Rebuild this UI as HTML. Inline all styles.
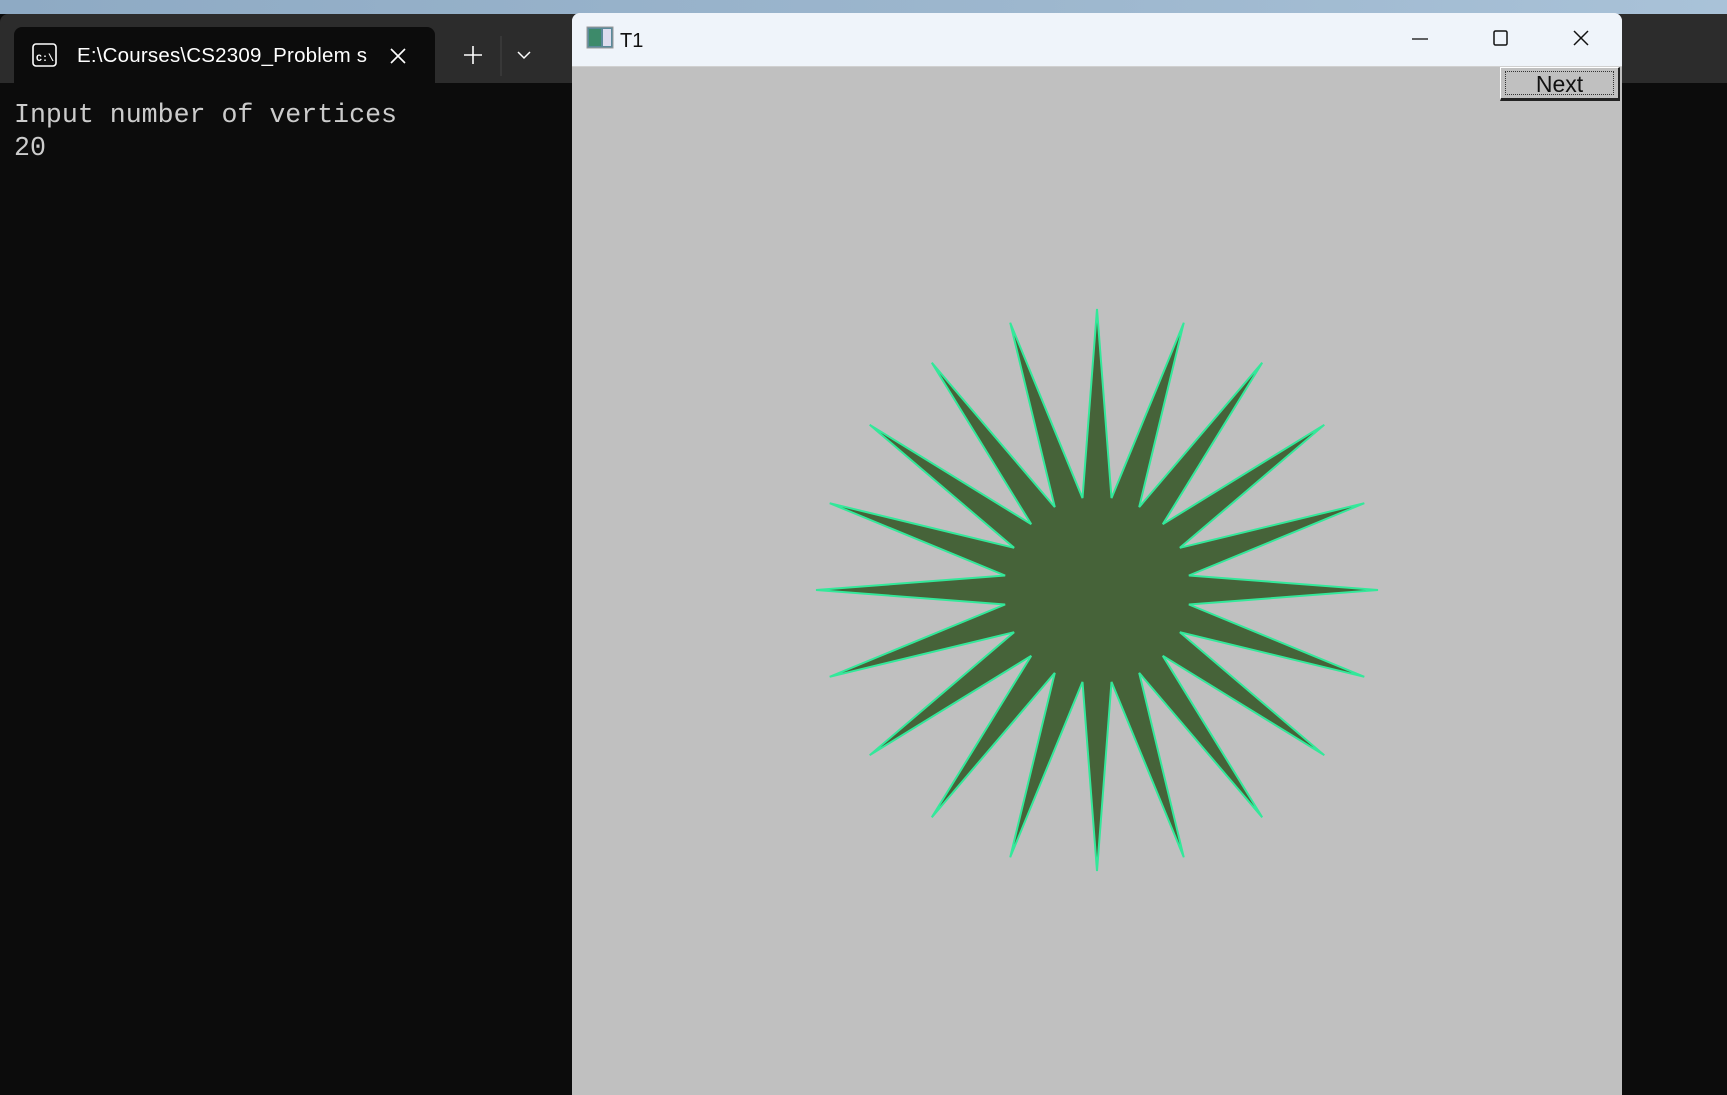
<!DOCTYPE html>
<html><head><meta charset="utf-8"><style>
body{margin:0;width:1727px;height:1095px;overflow:hidden;background:#0c0c0c;position:relative;font-family:"Liberation Sans",sans-serif}
.desk{position:absolute;left:0;top:0;width:1727px;height:14px;background:linear-gradient(90deg,#8eaac4,#9db7ce 60%,#a9c2d8)}
.bar{position:absolute;left:0;top:14px;width:1727px;height:69px;background:#2c2c2c;border-radius:8px 0 0 0}
.tab{position:absolute;left:14px;top:27px;width:421px;height:56px;background:#0c0c0c;border-radius:8px 8px 0 0}
.tabtxt{position:absolute;left:77px;top:44px;color:#fff;font-size:20.5px;letter-spacing:0.2px}
.term{position:absolute;left:14px;top:99px;color:#cccccc;font-family:"Liberation Mono",monospace;font-size:26.6px;line-height:33px;white-space:pre}
.win{position:absolute;left:572px;top:13px;width:1050px;height:1082px;background:#c0c0c0;border-radius:8px 8px 0 0;overflow:hidden}
.title{position:absolute;left:0;top:0;width:1050px;height:53px;background:#eff4fa;border-bottom:1px solid #d0d0d0}
.btn{position:absolute;left:928px;top:54px;width:120px;height:34px;background:#c0c0c0;border-top:1px solid #fff;border-left:1px solid #fff;border-right:2px solid #222;border-bottom:3px solid #222;box-sizing:border-box}
.btn span{position:absolute;left:4px;top:3px;right:4px;bottom:3px;border:1px dotted #333;text-align:center;font-size:23px;line-height:24px;color:#111}
</style></head><body>
<div class="desk"></div>
<div class="bar"></div>
<div class="tab"></div>
<svg style="position:absolute;left:0;top:0" width="1727" height="100">
<rect x="33" y="44" width="23" height="22" rx="3" fill="none" stroke="#fff" stroke-width="1.6"/>
<text x="36" y="61" font-size="10" fill="#fff" font-family="Liberation Mono" font-weight="bold">C:\</text>
<path d="M391 49 L405 63 M405 49 L391 63" stroke="#fff" stroke-width="1.6"/>
<path d="M464 55 H482 M473 46 V64" stroke="#fff" stroke-width="1.6"/>
<line x1="501" y1="36" x2="501" y2="76" stroke="#444" stroke-width="1"/>
<path d="M518 52 L524 58 L530 52" fill="none" stroke="#fff" stroke-width="1.5"/>
</svg>
<div class="tabtxt">E:\Courses\CS2309_Problem s</div>
<div class="term">Input number of vertices
20</div>
<div class="win">
<div class="title"></div>
<div class="btn"><span>Next</span></div>
</div>
<svg style="position:absolute;left:0;top:0" width="1727" height="1095">
<rect x="587" y="27" width="26" height="21" fill="#5a8a9a" stroke="#999"/>
<rect x="589" y="29" width="12" height="17" fill="#3d8a6a"/>
<rect x="603" y="29" width="8" height="17" fill="#dde"/>
<text x="620" y="47" font-size="20" fill="#111" font-family="Liberation Sans">T1</text>
<line x1="1412" y1="39" x2="1428" y2="39" stroke="#111" stroke-width="1.3"/>
<rect x="1494" y="31" width="13" height="14" fill="none" stroke="#111" stroke-width="1.5" rx="1.5"/>
<path d="M1574 31 L1588 45 M1588 31 L1574 45" stroke="#111" stroke-width="1.5"/>
<polygon fill="#466339" stroke="#33e89a" stroke-width="2" stroke-linejoin="miter" points="1097,309 1111.5,498.1 1183.8,322.7 1139.2,507.1 1262.2,362.7 1162.8,524.2 1324.3,424.8 1179.9,547.8 1364.3,503.2 1188.9,575.5 1378,590 1188.9,604.5 1364.3,676.8 1179.9,632.2 1324.3,755.2 1162.8,655.8 1262.2,817.3 1139.2,672.9 1183.8,857.3 1111.5,681.9 1097,871 1082.5,681.9 1010.2,857.3 1054.8,672.9 931.8,817.3 1031.2,655.8 869.7,755.2 1014.1,632.2 829.7,676.8 1005.1,604.5 816,590 1005.1,575.5 829.7,503.2 1014.1,547.8 869.7,424.8 1031.2,524.2 931.8,362.7 1054.8,507.1 1010.2,322.7 1082.5,498.1"/>
</svg>
</body></html>
